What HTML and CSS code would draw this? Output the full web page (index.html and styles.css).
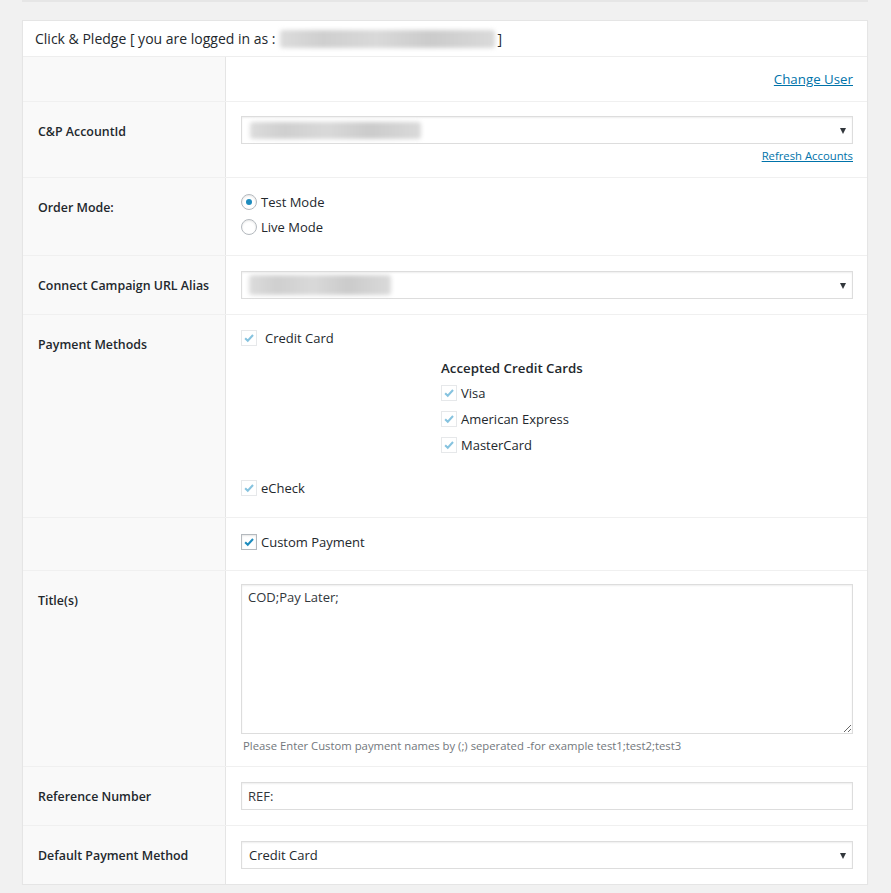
FILE: index.html
```html
<!DOCTYPE html>
<html lang="en">
<head>
<meta charset="utf-8">
<title>Click &amp; Pledge settings</title>
<link rel="stylesheet" href="styles.css">
</head>
<body>
<div class="page">
  <div class="top-edge"></div>
  <div class="panel">
    <h2 class="panel-head">Click &amp; Pledge [ you are logged in as : <span class="redact redact-email"></span> ]</h2>

    <div class="row">
      <div class="label"></div>
      <div class="field field-user"><a class="link" href="#">Change User</a></div>
    </div>

    <div class="row">
      <div class="label">C&amp;P AccountId</div>
      <div class="field field-account">
        <div class="select"><span class="redact redact-account"></span><span class="arrow"></span></div>
        <div class="refresh"><a class="link" href="#">Refresh Accounts</a></div>
      </div>
    </div>

    <div class="row">
      <div class="label">Order Mode:</div>
      <div class="field field-mode">
        <div class="opt-line"><span class="radio checked"></span><span>Test Mode</span></div>
        <div class="opt-line"><span class="radio"></span><span>Live Mode</span></div>
      </div>
    </div>

    <div class="row">
      <div class="label">Connect Campaign URL Alias</div>
      <div class="field field-std">
        <div class="select"><span class="redact redact-alias"></span><span class="arrow"></span></div>
      </div>
    </div>

    <div class="row">
      <div class="label">Payment Methods</div>
      <div class="field field-methods">
        <div class="cb-line cb-wide"><span class="cb disabled"><svg viewBox="0 0 16 16"><path d="M3.6 8.2 L6.6 11.2 L12.6 4.6"/></svg></span><span>Credit Card</span></div>
        <div class="cards">
          <div class="cards-title">Accepted Credit Cards</div>
          <div class="card-line"><span class="cb disabled"><svg viewBox="0 0 16 16"><path d="M3.6 8.2 L6.6 11.2 L12.6 4.6"/></svg></span><span>Visa</span></div>
          <div class="card-line"><span class="cb disabled"><svg viewBox="0 0 16 16"><path d="M3.6 8.2 L6.6 11.2 L12.6 4.6"/></svg></span><span>American Express</span></div>
          <div class="card-line"><span class="cb disabled"><svg viewBox="0 0 16 16"><path d="M3.6 8.2 L6.6 11.2 L12.6 4.6"/></svg></span><span>MasterCard</span></div>
        </div>
        <div class="cb-line echeck"><span class="cb disabled"><svg viewBox="0 0 16 16"><path d="M3.6 8.2 L6.6 11.2 L12.6 4.6"/></svg></span><span>eCheck</span></div>
      </div>
    </div>

    <div class="row">
      <div class="label"></div>
      <div class="field field-custom">
        <div class="cb-line"><span class="cb"><svg viewBox="0 0 16 16"><path d="M3.6 8.2 L6.6 11.2 L12.6 4.6"/></svg></span><span>Custom Payment</span></div>
      </div>
    </div>

    <div class="row">
      <div class="label">Title(s)</div>
      <div class="field field-titles">
        <textarea class="textarea">COD;Pay Later;</textarea>
        <div class="help">Please Enter Custom payment names by (;) seperated -for example test1;test2;test3</div>
      </div>
    </div>

    <div class="row">
      <div class="label">Reference Number</div>
      <div class="field field-std">
        <input class="input" type="text" value="REF:">
      </div>
    </div>

    <div class="row">
      <div class="label">Default Payment Method</div>
      <div class="field field-std">
        <div class="select"><span class="select-text">Credit Card</span><span class="arrow"></span></div>
      </div>
    </div>
  </div>
</div>
</body>
</html>
```

FILE: styles.css
```css
* { box-sizing: border-box; }

html, body {
  margin: 0;
  padding: 0;
  background: #f1f1f1;
}

body {
  font-family: "Open Sans", "Noto Sans", sans-serif;
  font-size: 13px;
  color: #23282d;
}

.page {
  padding-left: 22px;
  width: 868px;
}

.top-edge {
  height: 2px;
  background: #e6e6e6;
  margin-bottom: 18px;
}

.panel {
  background: #fff;
  border: 1px solid #e5e5e5;
  box-shadow: 0 1px 1px rgba(0, 0, 0, 0.04);
}

.panel-head {
  margin: 0;
  padding: 8px 12px;
  font-size: 14px;
  font-weight: 400;
  line-height: 19px;
  height: 36px;
  border-bottom: 1px solid #eee;
  display: flex;
  align-items: center;
}

.redact {
  display: inline-block;
  background: linear-gradient(90deg, #dcdcdc 0%, #cfcfcf 20%, #d9d9d9 45%, #cbcbcb 70%, #dadada 100%);
  filter: blur(2px);
  border-radius: 3px;
}

.redact-email {
  width: 215px;
  height: 18px;
  margin: 0 3px 0 4px;
}

.row {
  display: grid;
  grid-template-columns: 203px 1fr;
}

.row + .row {
  border-top: 1px solid #f0f0f0;
}

.label {
  background: #f9f9f9;
  border-right: 1px solid #e5e5e5;
  padding: 20px 10px 0 15px;
  font-size: 12.4px;
  font-weight: 600;
  line-height: 19px;
}

.field {
  padding: 15px 14px 15px 15px;
}

.field-user {
  padding-top: 13px;
  padding-bottom: 13px;
  text-align: right;
  font-size: 13.3px;
  line-height: 18px;
}

.link {
  color: #0073aa;
  text-decoration: underline;
}

.field-account {
  padding-top: 14px;
  padding-bottom: 13px;
}

.refresh {
  margin-top: 4px;
  text-align: right;
  font-size: 11.3px;
  line-height: 16px;
  height: 16px;
}

.select {
  position: relative;
  height: 28px;
  border: 1px solid #ddd;
  box-shadow: inset 0 1px 2px rgba(0, 0, 0, 0.07);
  background: #fff;
  display: flex;
  align-items: center;
  padding-left: 7px;
}

.select-text {
  line-height: 20px;
}

.arrow {
  position: absolute;
  right: 6px;
  top: 11px;
  width: 0;
  height: 0;
  border-top: 6px solid #32373c;
  border-left: 3.5px solid transparent;
  border-right: 3.5px solid transparent;
}

.redact-account {
  width: 171px;
  height: 17px;
  margin-left: 1px;
}

.redact-alias {
  width: 142px;
  height: 20px;
}

.field-mode {
  padding-top: 11px;
  padding-bottom: 16px;
}

.opt-line {
  height: 25px;
  display: flex;
  align-items: center;
  gap: 4px;
}

.radio {
  width: 16px;
  height: 16px;
  border-radius: 50%;
  border: 1px solid #b4b9be;
  background: #fff;
  box-shadow: inset 0 1px 2px rgba(0, 0, 0, 0.1);
  display: inline-flex;
  align-items: center;
  justify-content: center;
  flex: none;
}

.radio.checked::after {
  content: "";
  width: 6px;
  height: 6px;
  border-radius: 50%;
  background: #1e8cbe;
}

.cb-line {
  height: 16px;
  display: flex;
  align-items: center;
  gap: 4px;
}

.cb-wide {
  gap: 8px;
}

.cb {
  width: 16px;
  height: 16px;
  border: 1px solid #b4b9be;
  background: #fff;
  box-shadow: inset 0 1px 2px rgba(0, 0, 0, 0.1);
  display: inline-flex;
  flex: none;
}

.cb svg {
  width: 14px;
  height: 14px;
}

.cb path {
  fill: none;
  stroke: #1e8cbe;
  stroke-width: 2.3;
}

.cb.disabled {
  border-color: #e6e8ea;
  box-shadow: none;
}

.cb.disabled path {
  stroke: #86c3df;
}

.field-methods {
  padding-bottom: 21px;
}

.cards {
  margin: 10px 0 0 200px;
}

.cards-title {
  font-weight: 600;
  font-size: 13.3px;
  line-height: 24px;
  height: 24px;
}

.card-line {
  height: 26px;
  display: flex;
  align-items: center;
  gap: 4px;
}

.echeck {
  margin-top: 22px;
}

.field-custom {
  padding-top: 16px;
  padding-bottom: 20px;
}

.field-titles {
  padding-top: 13px;
  padding-bottom: 12px;
}

.textarea {
  display: block;
  width: 100%;
  height: 150px;
  margin: 0;
  border: 1px solid #ddd;
  box-shadow: inset 0 1px 2px rgba(0, 0, 0, 0.07);
  padding: 3px 6px;
  font-family: "Open Sans", "Noto Sans", sans-serif;
  font-size: 13px;
  line-height: 19px;
  color: #32373c;
  resize: vertical;
  outline: none;
}

.help {
  margin-top: 3px;
  padding-left: 2px;
  font-size: 11.3px;
  line-height: 17px;
  height: 17px;
  color: #72777c;
}

.input {
  display: block;
  width: 100%;
  height: 28px;
  margin: 0;
  border: 1px solid #ddd;
  box-shadow: inset 0 1px 2px rgba(0, 0, 0, 0.07);
  padding: 0 6px;
  font-family: "Open Sans", "Noto Sans", sans-serif;
  font-size: 13px;
  color: #32373c;
  outline: none;
}
```
